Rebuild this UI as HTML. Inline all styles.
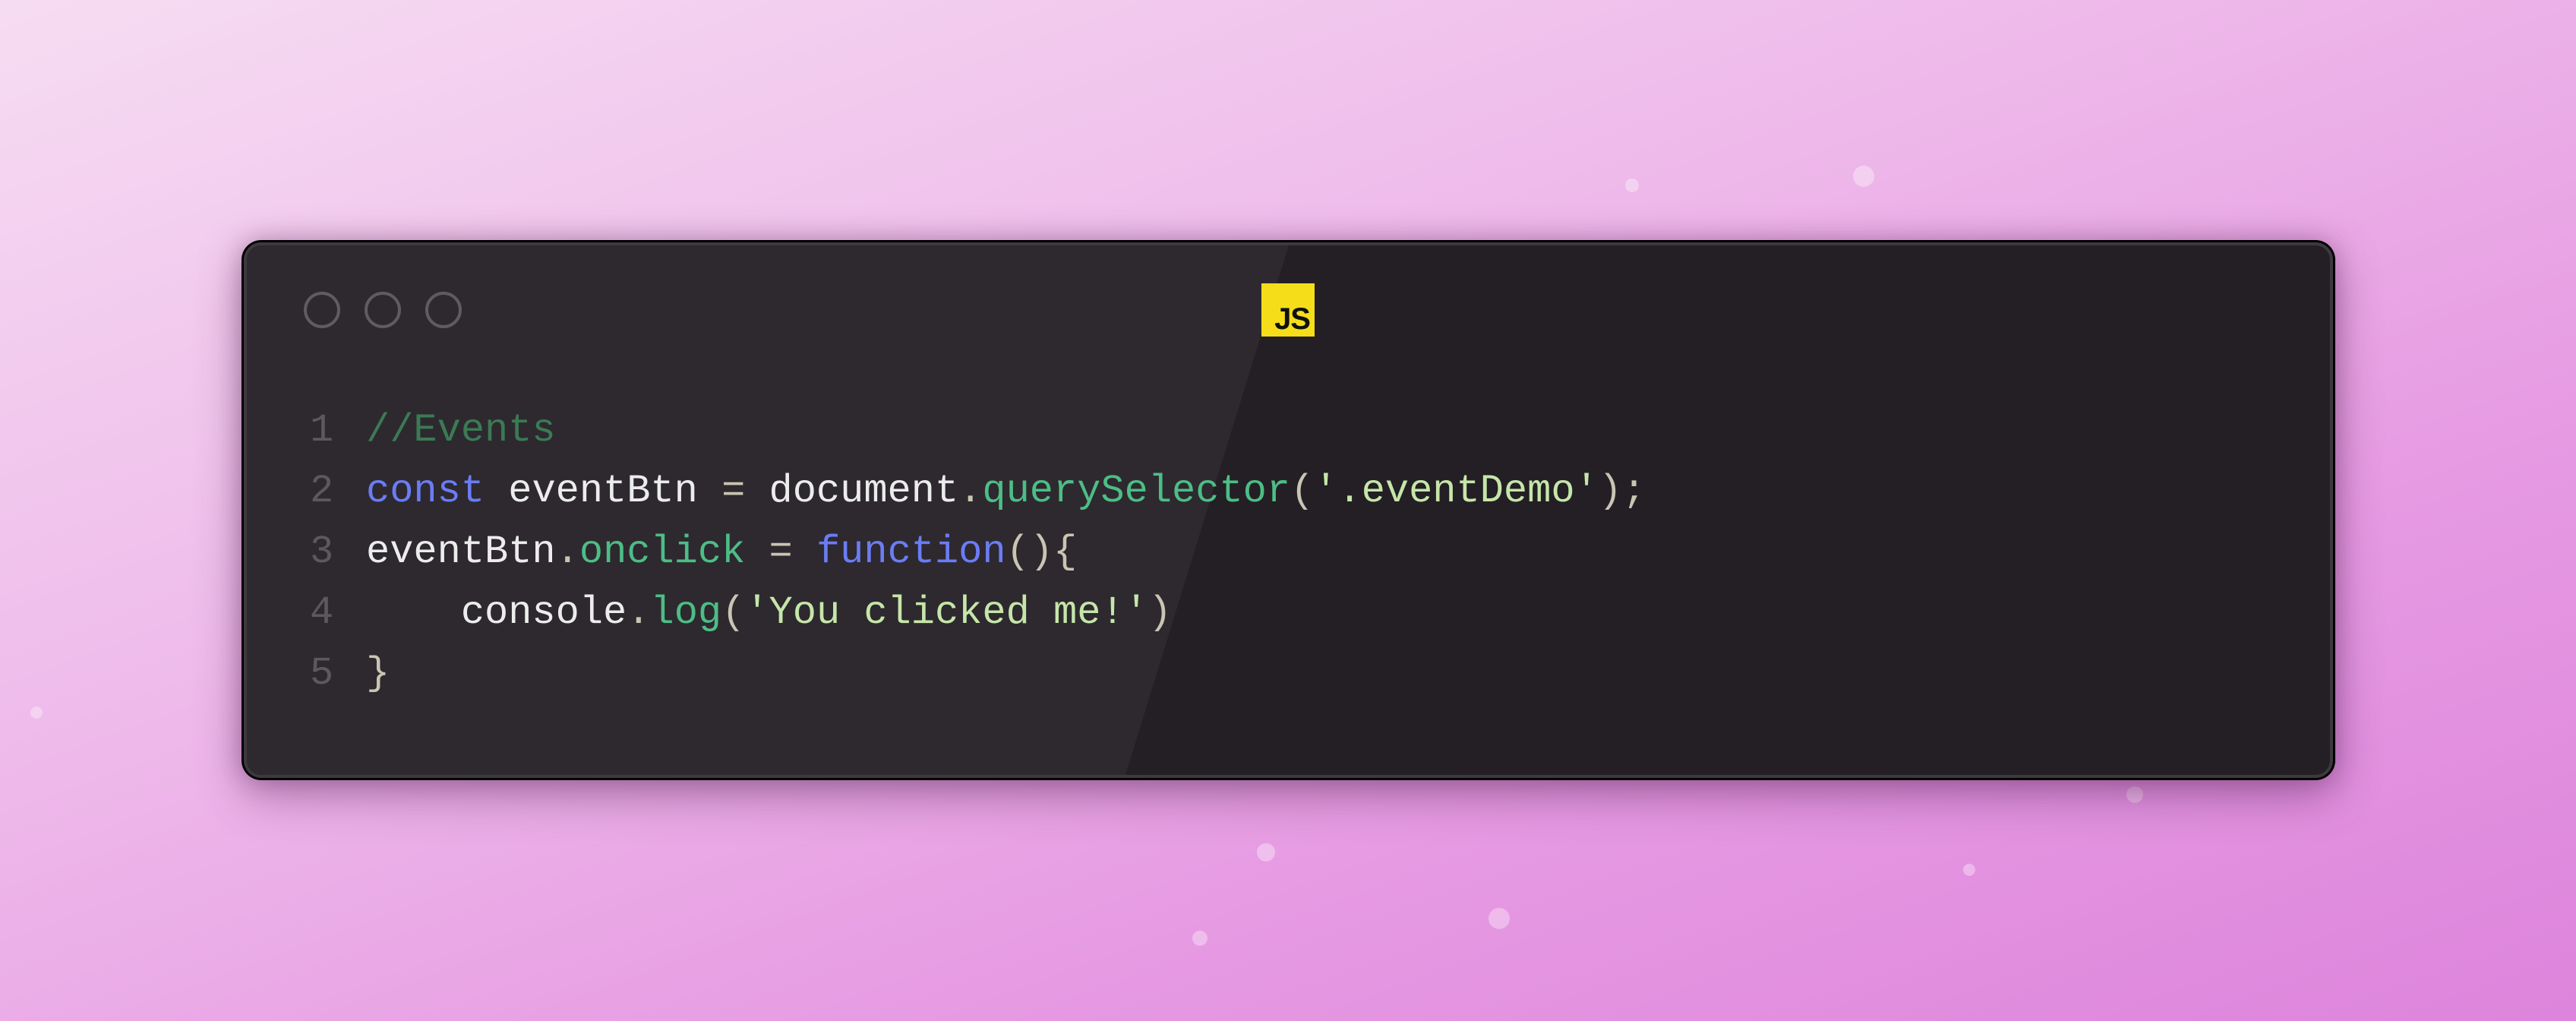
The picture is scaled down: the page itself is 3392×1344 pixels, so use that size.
<!DOCTYPE html>
<html><head><meta charset="utf-8"><style>
html,body{margin:0;padding:0}
body{width:3392px;height:1344px;overflow:hidden;position:relative;
background:linear-gradient(160deg,#f6dcf2 0%,#eeb9ea 40%,#e69ae2 70%,#dd84dc 100%);}
.dot{position:absolute;border-radius:50%;background:rgba(255,255,255,.35)}
.win{position:absolute;left:318px;top:316px;width:2757px;height:711px;box-sizing:border-box;
border-radius:26px;background:#000;padding:3px;
box-shadow:0 20px 60px rgba(90,40,90,.45),0 0 30px rgba(90,40,90,.3);}
.inner{position:relative;width:100%;height:100%;box-sizing:border-box;border:4px solid #3d393f;border-radius:23px;
overflow:hidden;background:#231f25;}
.shade{position:absolute;left:0;top:0;width:100%;height:100%;background:#2d292f;
clip-path:polygon(0 0,1372px 0,1157px 100%,0 100%);}
.c{position:absolute;top:61px;width:48px;height:48px;border:4px solid #5f5c60;border-radius:50%;box-sizing:border-box}
.js{position:absolute;left:1336px;top:50px;width:70px;height:70px;background:#f5dd1a;}
.js span{position:absolute;right:6px;bottom:0px;font:bold 40px "Liberation Sans",sans-serif;color:#111;letter-spacing:-1px}
.code{position:absolute;left:0;top:204px;font-family:"Liberation Mono",monospace;font-size:52px;line-height:80px;white-space:pre;color:#ececec}
.ln{position:absolute;left:83px;color:#5c585c}
.tx{position:absolute;left:157px}
.cm{color:#3b7a55}.kw{color:#6b7cf5}.fn{color:#4dbd86}.st{color:#c6e6a9}.p{color:#c9c5b2}
</style></head><body>
<div class="dot" style="left:2440px;top:218px;width:28px;height:28px"></div>
<div class="dot" style="left:2140px;top:235px;width:18px;height:18px"></div>
<div class="dot" style="left:1960px;top:1195px;width:28px;height:28px"></div>
<div class="dot" style="left:1655px;top:1110px;width:24px;height:24px"></div>
<div class="dot" style="left:1570px;top:1225px;width:20px;height:20px"></div>
<div class="dot" style="left:2585px;top:1137px;width:16px;height:16px"></div>
<div class="dot" style="left:40px;top:930px;width:16px;height:16px"></div>
<div class="dot" style="left:2800px;top:1035px;width:22px;height:22px"></div>
<div class="win"><div class="inner">
<div class="shade"></div>
<div class="c" style="left:75px"></div><div class="c" style="left:155px"></div><div class="c" style="left:235px"></div>
<div class="js"><span>JS</span></div>
<div class="code">
<div class="ln" style="top:0">1</div><div class="tx" style="top:0"><span class="cm">//Events</span></div>
<div class="ln" style="top:80px">2</div><div class="tx" style="top:80px"><span class="kw">const</span> eventBtn <span class="p">=</span> document<span class="p">.</span><span class="fn">querySelector</span><span class="p">(</span><span class="st">'.eventDemo'</span><span class="p">);</span></div>
<div class="ln" style="top:160px">3</div><div class="tx" style="top:160px">eventBtn<span class="p">.</span><span class="fn">onclick</span> <span class="p">=</span> <span class="kw">function</span><span class="p">(){</span></div>
<div class="ln" style="top:240px">4</div><div class="tx" style="top:240px">    console<span class="p">.</span><span class="fn">log</span><span class="p">(</span><span class="st">'You clicked me!'</span><span class="p">)</span></div>
<div class="ln" style="top:320px">5</div><div class="tx" style="top:320px"><span class="p">}</span></div>
</div>
</div></div>
</body></html>
